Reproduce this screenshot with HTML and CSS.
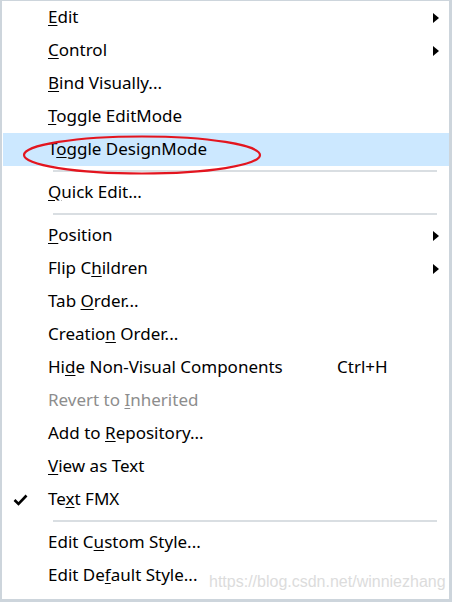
FILE: index.html
```html
<!DOCTYPE html>
<html>
<head>
<meta charset="utf-8">
<link rel="stylesheet" href="styles.css">
</head>
<body>
<div class="menu">
  <div class="item"><span class="check"></span><span class="label"><u>E</u>dit</span><span class="shortcut"></span><span class="sub"><svg width="6" height="10" viewBox="0 0 6 10"><path d="M0 0 L6 5 L0 10 Z" fill="#000"/></svg></span></div>
  <div class="item"><span class="check"></span><span class="label"><u>C</u>ontrol</span><span class="shortcut"></span><span class="sub"><svg width="6" height="10" viewBox="0 0 6 10"><path d="M0 0 L6 5 L0 10 Z" fill="#000"/></svg></span></div>
  <div class="item"><span class="check"></span><span class="label"><u>B</u>ind Visually...</span></div>
  <div class="item"><span class="check"></span><span class="label"><u>T</u>oggle EditMode</span></div>
  <div class="item hl"><span class="check"></span><span class="label">T<u>o</u>ggle DesignMode</span></div>
  <div class="sep"></div>
  <div class="item"><span class="check"></span><span class="label"><u>Q</u>uick Edit...</span></div>
  <div class="sep"></div>
  <div class="item"><span class="check"></span><span class="label"><u>P</u>osition</span><span class="shortcut"></span><span class="sub"><svg width="6" height="10" viewBox="0 0 6 10"><path d="M0 0 L6 5 L0 10 Z" fill="#000"/></svg></span></div>
  <div class="item"><span class="check"></span><span class="label">Flip C<u>h</u>ildren</span><span class="shortcut"></span><span class="sub"><svg width="6" height="10" viewBox="0 0 6 10"><path d="M0 0 L6 5 L0 10 Z" fill="#000"/></svg></span></div>
  <div class="item"><span class="check"></span><span class="label">Tab <u>O</u>rder...</span></div>
  <div class="item"><span class="check"></span><span class="label">Creatio<u>n</u> Order...</span></div>
  <div class="item"><span class="check"></span><span class="label">Hi<u>d</u>e Non-Visual Components</span><span class="shortcut">Ctrl+H</span></div>
  <div class="item disabled"><span class="check"></span><span class="label">Revert to <u>I</u>nherited</span></div>
  <div class="item"><span class="check"></span><span class="label">Add to <u>R</u>epository...</span></div>
  <div class="item"><span class="check"></span><span class="label"><u>V</u>iew as Text</span></div>
  <div class="item"><span class="check"><svg width="15" height="12" viewBox="0 0 15 12"><path d="M1.5 6 L5.5 10 L13.5 1.5" fill="none" stroke="#000" stroke-width="2.6"/></svg></span><span class="label">Te<u>x</u>t FMX</span></div>
  <div class="sep"></div>
  <div class="item"><span class="check"></span><span class="label">Edit C<u>u</u>stom Style...</span></div>
  <div class="item"><span class="check"></span><span class="label">Edit De<u>f</u>ault Style...</span></div>

  <svg class="ring" width="242" height="42" viewBox="0 0 242 42"><ellipse cx="121" cy="21" rx="118" ry="18.5" fill="none" stroke="#e3151f" stroke-width="2.2"/></svg>
  <div class="watermark">https://blog.csdn.net/winniezhang</div>
</div>
</body>
</html>
```

FILE: styles.css
```css
html, body {
  margin: 0;
  padding: 0;
  background: #fff;
}
.menu {
  position: relative;
  width: 452px;
  height: 602px;
  box-sizing: border-box;
  border-style: solid;
  border-color: #cdd5dc;
  border-width: 1px 3px 3px 2px;
  padding-left: 1px;
  font-family: "Noto Sans", "Open Sans", sans-serif;
  font-size: 17px;
  color: #000;
  background: #fff;
}
.item {
  display: grid;
  grid-template-columns: 45px 289px 1fr 16px;
  align-items: center;
  height: 33px;
}
.item.hl {
  background: #cce8ff;
}
.item.disabled {
  color: #8d8d8d;
}
.check {
  display: flex;
  justify-content: flex-start;
  padding-left: 10px;
  align-items: center;
}
.label,
.shortcut {
  white-space: nowrap;
  line-height: 20px;
  padding-bottom: 1px;
}
.label u {
  text-underline-offset: 2px;
}
.sub {
  display: flex;
  align-items: center;
}
.sep {
  height: 10px;
  display: flex;
  align-items: center;
}
.sep::before {
  content: "";
  display: block;
  margin-left: 50px;
  width: 384px;
  height: 2px;
  background: #d9dee2;
}
.ring {
  position: absolute;
  left: 19px;
  top: 133px;
}
.watermark {
  position: absolute;
  left: 207px;
  top: 572px;
  font-family: "Liberation Sans", Arial, sans-serif;
  font-size: 16px;
  color: #dcdcdc;
  white-space: nowrap;
}
```
